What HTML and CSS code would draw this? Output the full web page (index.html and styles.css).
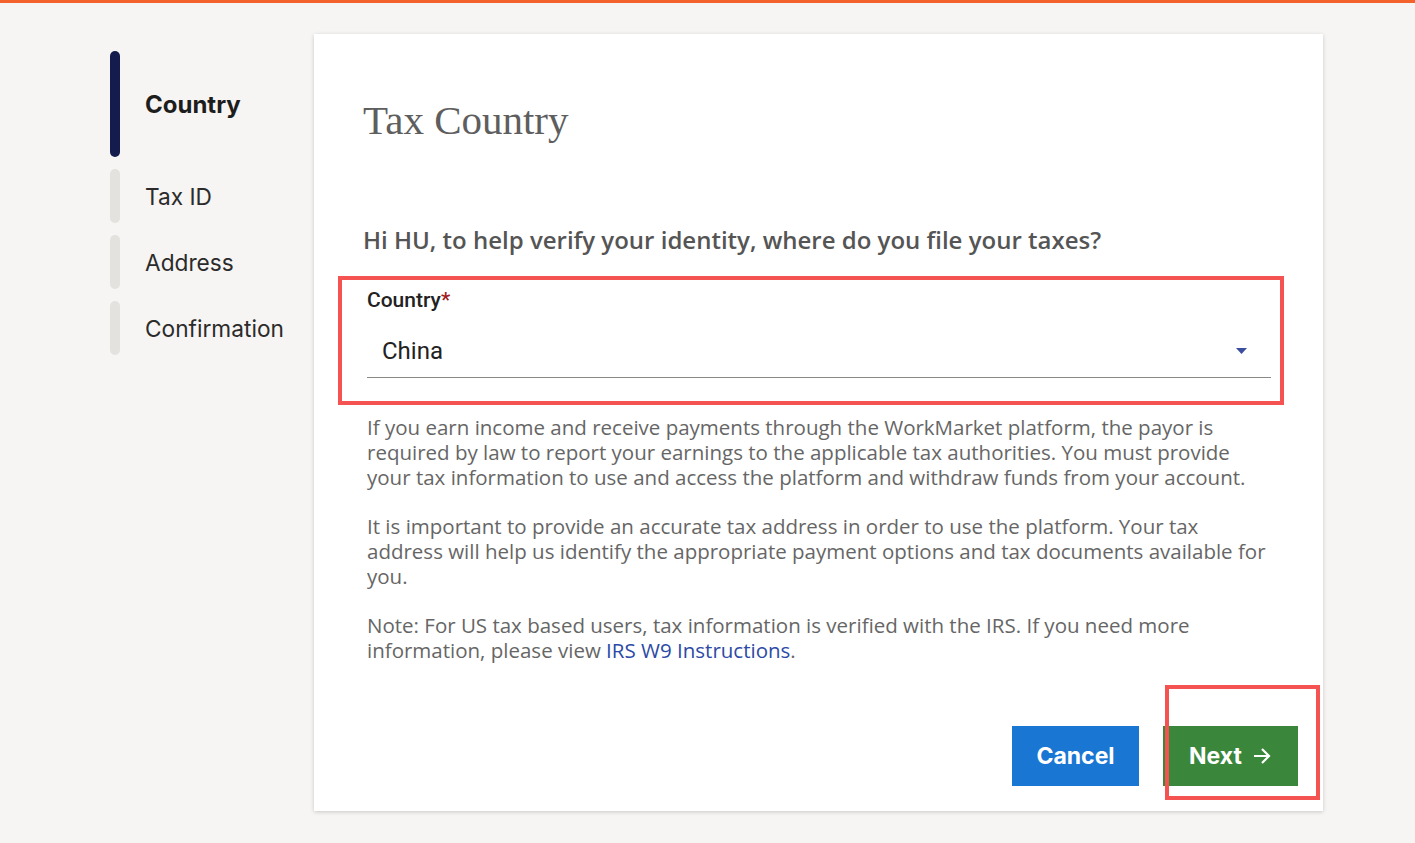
FILE: index.html
```html
<!DOCTYPE html>
<html lang="en">
<head>
<meta charset="utf-8">
<title>Tax Country</title>
<link rel="stylesheet" href="styles.css">
</head>
<body>
<div class="topbar"></div>
<div class="page">
  <nav class="steps">
    <div class="step active"><span class="bar"></span><span class="label">Country</span></div>
    <div class="step"><span class="bar"></span><span class="label">Tax ID</span></div>
    <div class="step"><span class="bar"></span><span class="label">Address</span></div>
    <div class="step"><span class="bar"></span><span class="label">Confirmation</span></div>
  </nav>
  <main class="card">
    <h1 class="title">Tax Country</h1>
    <h2 class="question">Hi HU, to help verify your identity, where do you file your taxes?</h2>
    <div class="highlight">
      <div class="field">
        <div class="field-label">Country<span class="req">*</span></div>
        <div class="select">
          <span class="select-value">China</span>
          <svg class="caret" width="11" height="6" viewBox="0 0 11 6"><path d="M0 0h11L5.5 6z" fill="#3a4d9e"/></svg>
        </div>
      </div>
    </div>
    <p class="text">If you earn income and receive payments through the WorkMarket platform, the payor is required by law to report your earnings to the applicable tax authorities. You must provide your tax information to use and access the platform and withdraw funds from your account.</p>
    <p class="text">It is important to provide an accurate tax address in order to use the platform. Your tax address will help us identify the appropriate payment options and tax documents available for you.</p>
    <p class="text">Note: For US tax based users, tax information is verified with the IRS. If you need more information, please view <a class="link" href="#">IRS W9 Instructions</a>.</p>
    <div class="actions">
      <button class="btn btn-cancel">Cancel</button>
      <div class="next-wrap">
        <button class="btn btn-next">Next
          <svg class="arrow" width="20" height="18" viewBox="0 0 20 18"><path d="M2 9h15M10 2l7 7-7 7" fill="none" stroke="#fff" stroke-width="2.2"/></svg>
        </button>
        <span class="next-mark"></span>
      </div>
    </div>
  </main>
</div>
</body>
</html>
```
FILE: styles.css
```css
html, body {
  margin: 0;
  padding: 0;
}
body {
  background: #f6f5f3;
  min-height: 843px;
}
.topbar {
  height: 3px;
  background: #f2622a;
}
.page {
  display: flex;
  align-items: flex-start;
  padding-left: 110px;
  padding-top: 31px;
}
.steps {
  width: 204px;
  padding-top: 17px;
  display: flex;
  flex-direction: column;
  gap: 12px;
  font-family: Inter, "Noto Sans", sans-serif;
}
.step {
  display: flex;
  align-items: center;
  height: 54px;
}
.step.active {
  height: 106px;
}
.bar {
  width: 10px;
  align-self: stretch;
  border-radius: 5px;
  background: #e4e2de;
  margin-right: 25px;
}
.step.active .bar {
  background: #131c4c;
}
.label {
  font-size: 22.7px;
  color: #2b2b2b;
}
.step.active .label {
  font-weight: 700;
  font-size: 24px;
  color: #1d1d1d;
}
.card {
  width: 909px;
  background: #fff;
  box-shadow: 0 1px 4px rgba(0,0,0,0.18);
  padding: 62px 51px 25px 49px;
}
.title {
  margin: 0;
  font-family: "Liberation Serif", serif;
  font-weight: 400;
  font-size: 41px;
  line-height: 48px;
  color: #5e5e5e;
}
.question {
  margin: 81px 0 0;
  font-family: "Open Sans", sans-serif;
  font-weight: 600;
  font-size: 24px;
  line-height: 30px;
  color: #555;
}
.highlight {
  margin: 21px -12px 0 -25px;
  border: 4px solid #f55252;
  padding: 9px 9px 23px 25px;
}
.field-label {
  font-family: Roboto, sans-serif;
  font-weight: 500;
  font-size: 21px;
  line-height: 22px;
  color: #222;
}
.req {
  color: #a31c1c;
}
.select {
  display: flex;
  align-items: center;
  justify-content: space-between;
  height: 52px;
  padding: 14px 24px 0 15px;
  border-bottom: 1px solid #8c8a86;
}
.select-value {
  font-family: Roboto, sans-serif;
  font-size: 24px;
  color: #222;
}
.text {
  margin: 10px 0 24px 4px;
  font-family: "Open Sans", sans-serif;
  font-size: 20.5px;
  line-height: 25px;
  color: #666;
}
.text + .text {
  margin-top: 0;
}
.link {
  color: #2c4aa6;
  text-decoration: none;
}
.actions {
  display: flex;
  justify-content: flex-end;
  gap: 24px;
  margin: 63px -26px 0 0;
}
.btn {
  height: 60px;
  border: 0;
  border-radius: 0;
  font-family: Inter, "Noto Sans", sans-serif;
  font-weight: 700;
  font-size: 23px;
  color: #fff;
  display: flex;
  align-items: center;
  justify-content: center;
  gap: 10px;
}
.btn-cancel {
  width: 127px;
  background: #1a76d3;
}
.next-wrap {
  position: relative;
}
.btn-next {
  width: 135px;
  background: #3a873c;
}
.next-mark {
  position: absolute;
  left: 2px;
  top: -41px;
  width: 147px;
  height: 107px;
  border: 4px solid #f55252;
  pointer-events: none;
}
```
